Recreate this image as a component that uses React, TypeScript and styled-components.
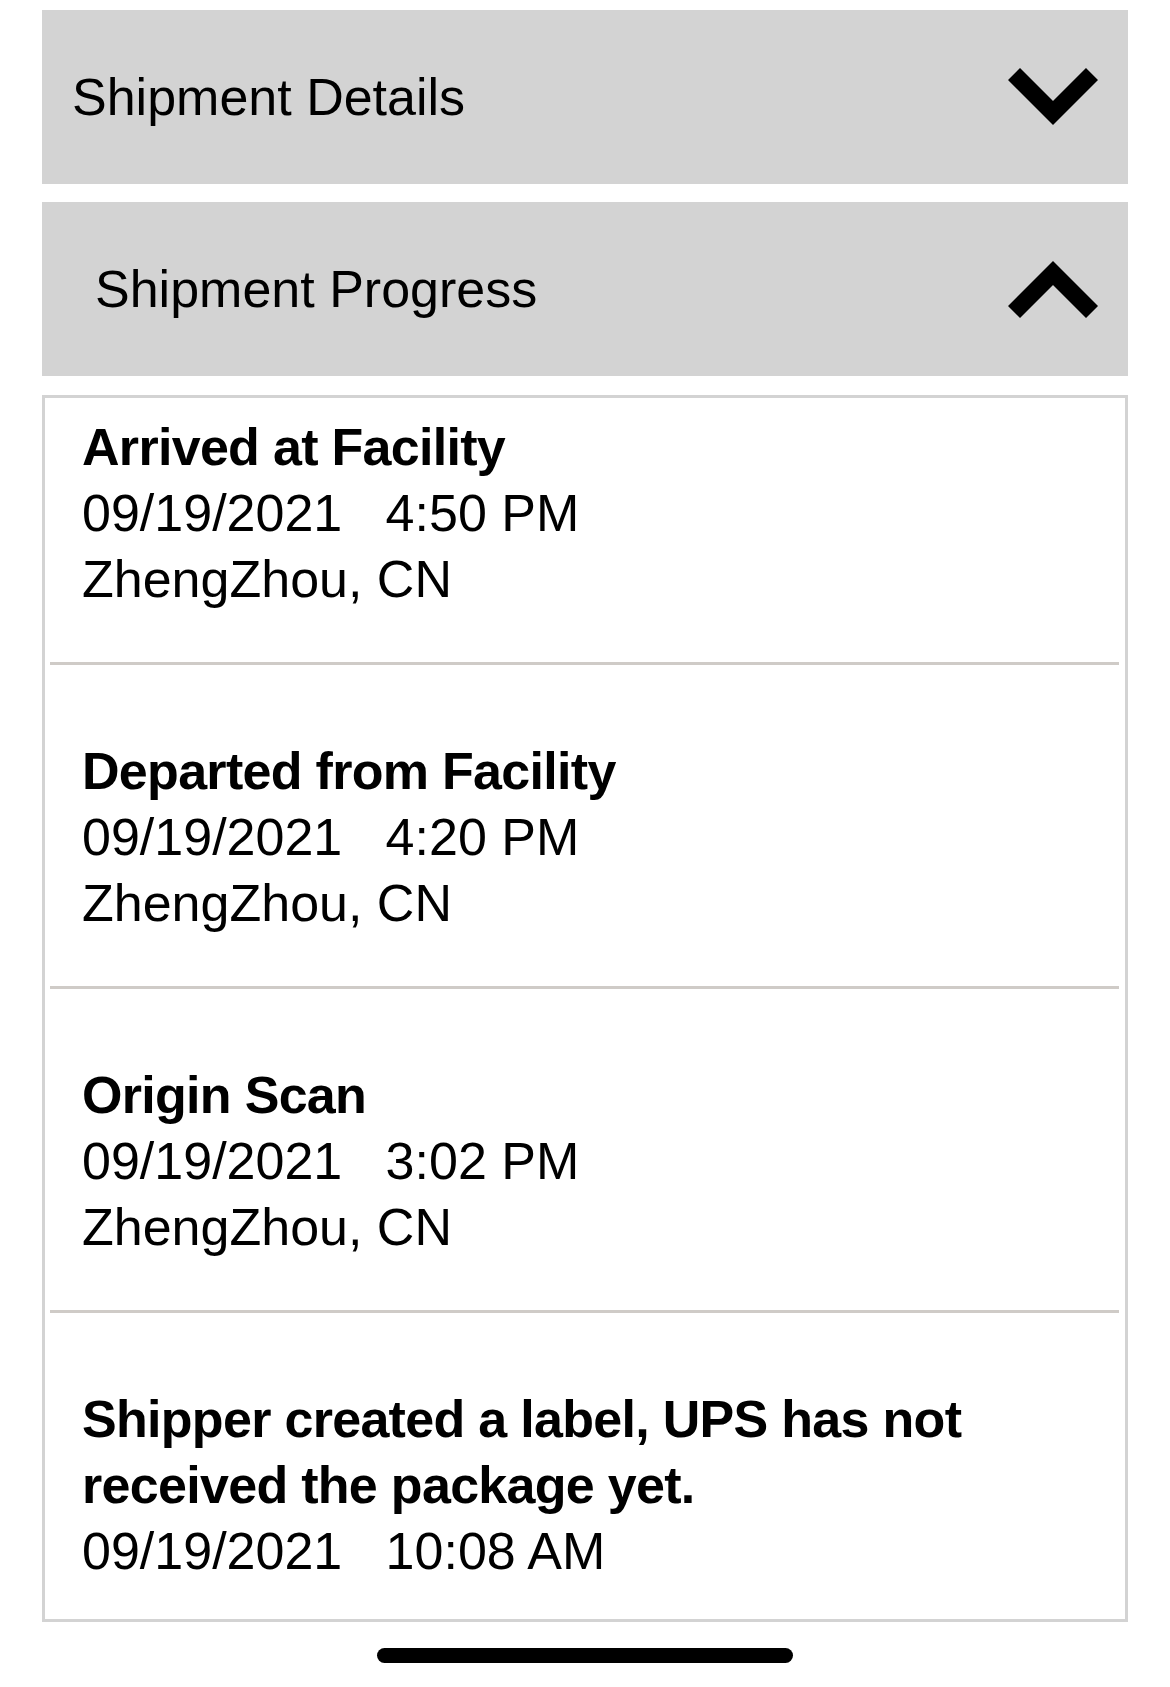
import styled, { createGlobalStyle } from "styled-components"

const GlobalStyle = createGlobalStyle`
    html, body {
        margin: 0;
        padding: 0;
        background: #ffffff;
    }
    body {
        font-family: "Liberation Sans", Arial, sans-serif;
        color: #000000;
    }
`

const events = [{
    title: 'Arrived at Facility',
    date: '09/19/2021',
    time: '4:50 PM',
    place: 'ZhengZhou, CN'
}, {
    title: 'Departed from Facility',
    date: '09/19/2021',
    time: '4:20 PM',
    place: 'ZhengZhou, CN'
}, {
    title: 'Origin Scan',
    date: '09/19/2021',
    time: '3:02 PM',
    place: 'ZhengZhou, CN'
}, {
    title: 'Shipper created a label, UPS has not received the package yet.',
    date: '09/19/2021',
    time: '10:08 AM',
    place: ''
}]

const Page = styled.div`
    display: flex;
    flex-direction: column;
    padding: 10px 42px 0;
    min-height: 1687px;
    box-sizing: border-box;
`

const Sections = styled.div`
    display: flex;
    flex-direction: column;
    gap: 18px;
`

const SectionHeader = styled.div<{ $indent: number }>`
    display: flex;
    flex-direction: row;
    align-items: center;
    justify-content: space-between;
    height: 174px;
    background: #d3d3d3;
    padding-left: ${({ $indent }) => $indent}px;
    padding-right: 30px;
    box-sizing: border-box;
    cursor: pointer;
`

const SectionTitle = styled.span`
    font-size: 52px;
    line-height: 60px;
    font-weight: 400;
`

const ChevronSvg = styled.svg`
    width: 90px;
    height: 58px;
    display: block;
    flex-shrink: 0;
`

const Card = styled.div`
    margin-top: 19px;
    border: 3px solid #d3d3d3;
    background: #ffffff;
    display: flex;
    flex-direction: column;
`

const Item = styled.div<{ $first: boolean, $last: boolean }>`
    display: flex;
    flex-direction: column;
    margin: 0 6px 0 5px;
    padding: ${({ $first }) => $first ? 16 : 73}px 20px ${({ $last }) => $last ? 35 : 50}px 32px;
    border-bottom: ${({ $last }) => $last ? 'none' : '3px solid #cfcbc7'};
    font-size: 52px;
    line-height: 66px;
`

const ItemTitle = styled.div`
    font-weight: 700;
    letter-spacing: -0.7px;
`

const ItemLine = styled.div`
    font-weight: 400;
    white-space: pre;
`

const HomeBar = styled.div`
    align-self: center;
    width: 416px;
    height: 15px;
    border-radius: 8px;
    background: #000000;
    margin-top: 26px;
`

const Chevron = ({ up }: { up: boolean }) => (
    <ChevronSvg viewBox="0 0 90 58">
        <polyline
            points={up ? "6,52 45,13 84,52" : "6,6 45,45 84,6"}
            fill="none"
            stroke="#000"
            strokeWidth={17}
            strokeLinejoin="miter"
            strokeLinecap="butt"
        />
    </ChevronSvg>
)

const App = () => {
    return (
        <>
            <GlobalStyle />
            <Page>
                <Sections>
                    <SectionHeader $indent={30}>
                        <SectionTitle>Shipment Details</SectionTitle>
                        <Chevron up={false} />
                    </SectionHeader>
                    <SectionHeader $indent={53}>
                        <SectionTitle>Shipment Progress</SectionTitle>
                        <Chevron up={true} />
                    </SectionHeader>
                </Sections>
                <Card>
                    {events.map((item, i) => (
                        <Item key={item.title} $first={i === 0} $last={i === events.length - 1}>
                            <ItemTitle>{item.title}</ItemTitle>
                            <ItemLine>{`${item.date}   ${item.time}`}</ItemLine>
                            {item.place && <ItemLine>{item.place}</ItemLine>}
                        </Item>
                    ))}
                </Card>
                <HomeBar />
            </Page>
        </>
    )
}

export default App
